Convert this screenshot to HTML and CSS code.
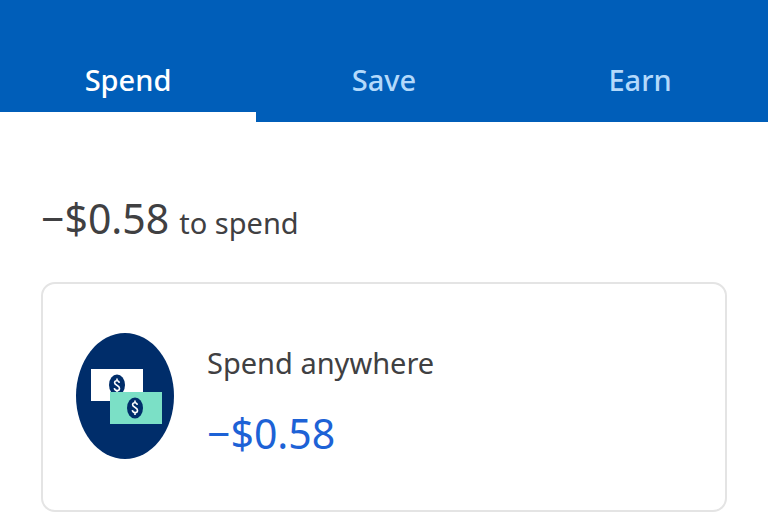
FILE: index.html
```html
<!DOCTYPE html>
<html lang="en">
<head>
<meta charset="utf-8">
<meta name="viewport" content="width=device-width, initial-scale=1">
<title>Spend</title>
<link rel="stylesheet" href="styles.css">
</head>
<body>
<header class="header">
  <nav class="tabs" role="tablist" aria-label="Account">
    <button class="tab tab-active" type="button" role="tab" aria-selected="true">Spend</button>
    <button class="tab" type="button" role="tab" aria-selected="false">Save</button>
    <button class="tab" type="button" role="tab" aria-selected="false">Earn</button>
  </nav>
</header>
<main class="content">
  <h1 class="balance"><span class="amount">−$0.58</span><span class="label">to spend</span></h1>
  <section class="card">
    <svg class="icon" viewBox="0 0 98 128" aria-hidden="true">
      <ellipse cx="49" cy="63" rx="49" ry="63" fill="#002d6a"/>
      <path d="M15 36h52v32H15z" fill="#fff"/>
      <ellipse cx="41" cy="52" rx="8" ry="10.5" fill="#002d6a"/>
      <path id="dollar" d="M43.300 49.800C42.800 47 38.600 47 38.600 49.800C38.600 52.400 43.500 52 43.500 55.200C43.500 58.400 38.800 58.400 38.300 55.200M41 45.500V48M41 57.500V60" fill="none" stroke="#fff" stroke-width="1.600"/>
      <path d="M34 59h52v32H34z" fill="#7be0c6"/>
      <ellipse cx="59" cy="75" rx="8" ry="10.5" fill="#002d6a"/>
      <use href="#dollar" x="18" y="22"/>
    </svg>
    <div class="details">
      <h2 class="label">Spend anywhere</h2>
      <p class="amount amount-blue">−$0.58</p>
    </div>
  </section>
</main>
</body>
</html>
```
FILE: styles.css
```css
* {
  box-sizing: border-box;
}

body {
  margin: 0;
  background: #fff;
  color: #404042;
  font-family: "Noto Sans", "Open Sans", sans-serif;
}

h1,
h2,
p {
  margin: 0;
  font-weight: 400;
}

.header {
  padding-top: 48px;
  background: #005eb9;
}

.tabs {
  display: grid;
  grid-template-columns: repeat(3, 1fr);
}

.tab {
  padding: 0;
  border: 0;
  border-bottom: 10px solid transparent;
  background: none;
  color: #b3d9fb;
  font: 500 29px/64px "Noto Sans", "Open Sans", sans-serif;
}

.tab-active {
  border-color: #fff;
  color: #fff;
}

.content {
  padding: 66px 41px 0;
}

.balance {
  display: flex;
  align-items: baseline;
  gap: 10px;
}

.amount {
  font-size: 41px;
  line-height: 60px;
}

.label {
  font-size: 29px;
  line-height: 48px;
}

.amount-blue {
  color: #1d62d6;
}

.card {
  display: flex;
  align-items: center;
  gap: 33px;
  margin-top: 34px;
  padding: 47px 33px;
  border: 2px solid #e4e4e4;
  border-radius: 14px;
}

.icon {
  flex: none;
  width: 98px;
  height: 128px;
}

.details {
  display: grid;
  gap: 16px;
  padding-top: 8px;
}
```
